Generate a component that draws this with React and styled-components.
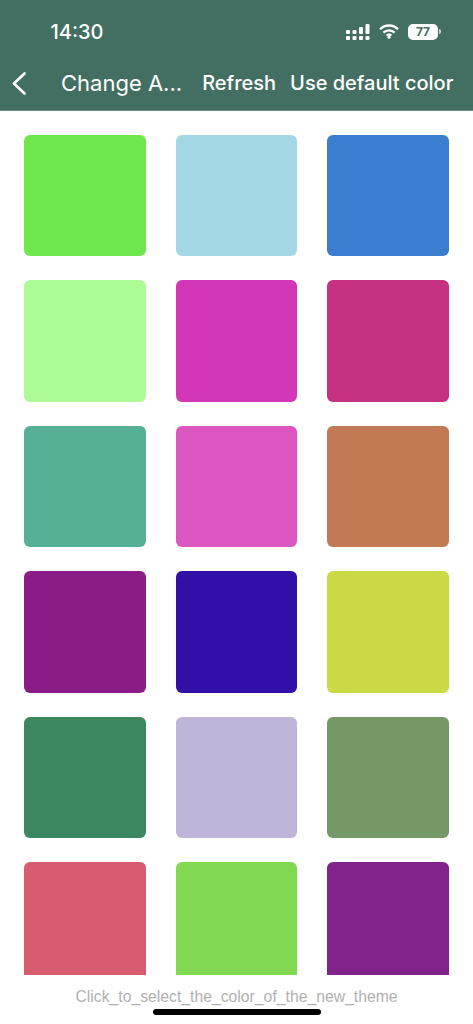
import styled, { createGlobalStyle } from "styled-components";

const colors = [
  "#6ee74c", "#a3d7e4", "#3b7ecf",
  "#adfb94", "#d336b6", "#c53081",
  "#56b096", "#dc56c2", "#c17a53",
  "#8a1c88", "#3210a8", "#c9da45",
  "#3d8760", "#bfb5d8", "#759966",
  "#d75c70", "#80d951", "#82228b",
];

export default function App() {
  return (
    <Page>
      <GlobalStyle />
      <Header>
        <StatusBar>
          <Time>14:30</Time>
          <StatusIcons>
            <Signal viewBox="0 0 24 16">
              <rect x="0" y="6" width="4" height="4" rx="1" />
              <rect x="0" y="12" width="4" height="4" rx="1" />
              <rect x="6.5" y="6" width="4" height="4" rx="1" />
              <rect x="6.5" y="12" width="4" height="4" rx="1" />
              <rect x="13" y="3" width="4" height="7" rx="1" />
              <rect x="13" y="12" width="4" height="4" rx="1" />
              <rect x="19.5" y="0" width="4" height="10" rx="1" />
              <rect x="19.5" y="12" width="4" height="4" rx="1" />
            </Signal>
            <Wifi viewBox="0 0 20 15">
              <path d="M1 5.2a12.8 12.8 0 0 1 18 0" />
              <path d="M4.4 8.6a8 8 0 0 1 11.2 0" />
              <path d="M7.6 11.6a3.5 3.5 0 0 1 4.8 0" />
              <circle cx="10" cy="13.2" r="1.5" />
            </Wifi>
            <Battery>
              <BatteryBody>77</BatteryBody>
              <BatteryCap />
            </Battery>
          </StatusIcons>
        </StatusBar>
        <NavBar>
          <BackIcon viewBox="0 0 16 24">
            <path d="M13.5 2.5 3 12.5 13.5 22.5" />
          </BackIcon>
          <Title>Change A...</Title>
          <NavAction>Refresh</NavAction>
          <NavAction>Use default color</NavAction>
        </NavBar>
      </Header>
      <ColorArea>
        <ColorGrid>
          {colors.map((color) => (
            <Swatch key={color} $color={color} />
          ))}
        </ColorGrid>
      </ColorArea>
      <Hint>Click_to_select_the_color_of_the_new_theme</Hint>
      <HomeIndicator />
    </Page>
  );
}

const GlobalStyle = createGlobalStyle`
  html, body {
    margin: 0;
    padding: 0;
    background: #fff;
  }
  * {
    box-sizing: border-box;
  }
`;

const Page = styled.div`
  position: relative;
  display: flex;
  flex-direction: column;
  width: 473px;
  height: 1024px;
  overflow: hidden;
  background: #fff;
  font-family: Inter, "Liberation Sans", sans-serif;
`;

const Header = styled.header`
  flex: none;
  height: 111px;
  background: #436f62;
  border-bottom: 1px solid #6d9085;
  color: #fff;
`;

const StatusBar = styled.div`
  display: flex;
  align-items: center;
  justify-content: space-between;
  height: 63px;
  padding: 0 32px 0 50.5px;
`;

const Time = styled.span`
  font-size: 20px;
  font-weight: 500;
`;

const StatusIcons = styled.div`
  display: flex;
  align-items: center;
`;

const Signal = styled.svg`
  width: 24px;
  height: 16px;
  fill: #fff;
`;

const Wifi = styled.svg`
  width: 20px;
  height: 15px;
  margin-left: 9px;
  fill: #fff;

  path {
    fill: none;
    stroke: #fff;
    stroke-width: 2.3;
  }
`;

const Battery = styled.div`
  display: flex;
  align-items: center;
  margin-left: 9px;
`;

const BatteryBody = styled.div`
  display: flex;
  align-items: center;
  justify-content: center;
  width: 30px;
  height: 16px;
  border-radius: 5px;
  background: #fff;
  color: #436f62;
  font-size: 12px;
  font-weight: 700;
`;

const BatteryCap = styled.div`
  width: 2px;
  height: 5px;
  margin-left: 1px;
  border-radius: 0 2px 2px 0;
  background: #c9d6d1;
`;

const NavBar = styled.nav`
  display: flex;
  align-items: center;
  height: 40px;
  padding: 0 20px 0 11px;
`;

const BackIcon = styled.svg`
  flex: none;
  width: 16px;
  height: 24px;
  fill: none;
  stroke: #fff;
  stroke-width: 2.6;
  stroke-linecap: round;
  stroke-linejoin: round;
`;

const Title = styled.h1`
  margin: 0 0 0 34px;
  font-size: 22px;
  font-weight: 400;
  white-space: nowrap;
`;

const NavAction = styled.button`
  margin-left: 14px;
  padding: 0;
  border: 0;
  background: none;
  color: #fff;
  font-family: inherit;
  font-size: 20px;
  font-weight: 500;
  white-space: nowrap;
  &:first-of-type {
    margin-left: 20px;
  }
`;

const ColorArea = styled.main`
  flex: none;
  height: 864px;
  overflow: hidden;
`;

const ColorGrid = styled.div`
  display: grid;
  grid-template-columns: repeat(3, 121.5px);
  justify-content: space-between;
  row-gap: 24.25px;
  padding: 23.9px 24.25px 0;
`;

const Swatch = styled.div`
  height: 121.25px;
  border-radius: 6px;
  background: ${(props) => props.$color};
`;

const Hint = styled.p`
  margin: 13px 0 0;
  color: #b0b0b0;
  font-family: "Liberation Sans", Arial, sans-serif;
  font-size: 15.75px;
  line-height: 18px;
  text-align: center;
`;

const HomeIndicator = styled.div`
  position: absolute;
  bottom: 9px;
  left: 153px;
  width: 168px;
  height: 6px;
  border-radius: 3px;
  background: #000;
`;
